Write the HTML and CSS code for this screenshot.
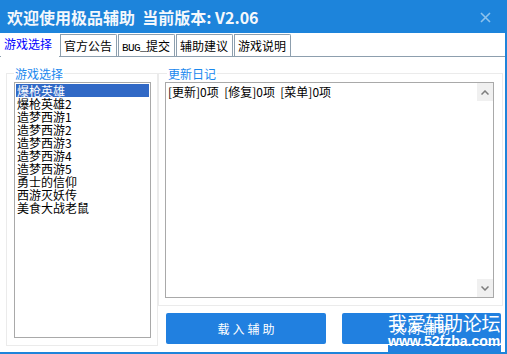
FILE: index.html
```html
<!DOCTYPE html>
<html lang="zh-CN">
<head>
    <meta charset="UTF-8">
    <title>极品辅助</title>
    <link rel="stylesheet" href="styles.css">
</head>
<body>

<div class="window">
    <div class="titlebar">
        <span class="title">欢迎使用极品辅助&nbsp; 当前版本: V2.06</span>
        <svg class="close" width="11" height="11" viewBox="0 0 11 11">
            <path d="M1 1 L10 10 M10 1 L1 10" stroke="#8ec2ec" stroke-width="1.6"/>
        </svg>
    </div>

    <div class="tabs">
        <div class="tab active">游戏选择</div>
        <div class="tab">官方公告</div>
        <div class="tab"><span class="mono">BUG_</span>提交</div>
        <div class="tab">辅助建议</div>
        <div class="tab">游戏说明</div>
    </div>

    <div class="content">
        <fieldset class="group games">
            <legend>游戏选择</legend>
            <ul class="list">
                <li class="selected">爆枪英雄</li>
                <li>爆枪英雄2</li>
                <li>造梦西游1</li>
                <li>造梦西游2</li>
                <li>造梦西游3</li>
                <li>造梦西游4</li>
                <li>造梦西游5</li>
                <li>勇士的信仰</li>
                <li>西游灭妖传</li>
                <li>美食大战老鼠</li>
            </ul>
        </fieldset>

        <div class="side">
            <fieldset class="group log">
                <legend>更新日记</legend>
                <div class="logbox">
                    <div class="logtext">[更新]0项&nbsp; [修复]0项&nbsp; [菜单]0项</div>
                    <div class="scroll">
                        <span class="arrow">
                            <svg width="8" height="5" viewBox="0 0 8 5"><path d="M0.5 4.5 L4 1 L7.5 4.5" fill="none" stroke="#7d7d7d" stroke-width="1.5"/></svg>
                        </span>
                        <span class="arrow">
                            <svg width="8" height="5" viewBox="0 0 8 5"><path d="M0.5 0.5 L4 4 L7.5 0.5" fill="none" stroke="#7d7d7d" stroke-width="1.5"/></svg>
                        </span>
                    </div>
                </div>
            </fieldset>

            <div class="buttons">
                <button class="btn">载入辅助</button>
                <button class="btn second">关闭辅助</button>
            </div>
        </div>
    </div>

    <div class="watermark">
        <div class="wm-title">我爱辅助论坛</div>
        <div class="wm-url">www.52fzba.com</div>
    </div>
</div>

</body>
</html>
```

FILE: styles.css
```css
body {
    margin: 0;
    background-color: #fff;
    font-family: "Noto Sans CJK SC", "Liberation Sans", sans-serif;
    font-size: 12px;
}
.window {
    position: relative;
    width: 507px;
    height: 354px;
    box-sizing: border-box;
    border-right: 2px solid #1e84da;
    border-bottom: 2px solid #1e84da;
    background-color: #fff;
    overflow: hidden;
}
.titlebar {
    height: 33px;
    background-color: #1d84db;
    display: flex;
    align-items: center;
    justify-content: space-between;
    padding: 0 14px 0 7px;
}
.title {
    color: #f4f8fc;
    font-size: 16px;
    font-weight: bold;
    line-height: 20px;
}
.close {
    display: block;
    margin-top: 1px;
}
.tabs {
    display: flex;
    align-items: flex-end;
    height: 23px;
    padding-left: 1px;
    border-bottom: 1px solid #8d9fae;
}
.tab {
    box-sizing: border-box;
    width: 57px;
    height: 22px;
    margin-right: 1px;
    padding-left: 3px;
    line-height: 21px;
    color: #000;
    border: 1px solid #8d9fae;
    border-bottom: none;
    border-radius: 0 2px 0 0;
    white-space: nowrap;
}
.tab .mono {
    font-family: "Liberation Mono", monospace;
    font-size: 11px;
    letter-spacing: -0.6px;
}
.tab.active {
    width: 58px;
    height: 24px;
    margin-bottom: -1px;
    padding-left: 3px;
    line-height: 22px;
    color: #0000ff;
    border: none;
    background-color: #fff;
}
.content {
    display: flex;
    padding: 9px 0 0 6px;
}
.group {
    margin: 0;
    border: 1px solid #ebebeb;
    min-width: 0;
}
.group legend {
    padding: 0 1px;
    line-height: 15px;
    color: #1a88ee;
}
.games {
    width: 152px;
    box-sizing: border-box;
    padding: 1px 6px 7px 7px;
}
.list {
    list-style: none;
    margin: 0;
    height: 256px;
    box-sizing: border-box;
    padding: 1px;
    border: 1px solid #a9a9a9;
}
.list li {
    height: 13px;
    line-height: 13px;
    padding-left: 1px;
    white-space: nowrap;
}
.list li.selected {
    background-color: #3169c6;
    color: #fff;
}
.side {
    width: 345px;
}
.log {
    width: 345px;
    box-sizing: border-box;
    padding: 1px 8px 7px 6px;
}
.log legend {
    margin-left: 2px;
}
.logbox {
    display: flex;
    height: 216px;
    box-sizing: border-box;
    border: 1px solid #a9a9a9;
}
.logtext {
    flex: 1;
    padding: 2px 0 0 2px;
    line-height: 13px;
    white-space: nowrap;
}
.scroll {
    width: 16px;
    display: flex;
    flex-direction: column;
    justify-content: space-between;
}
.arrow {
    height: 18px;
    background-color: #f0f0f0;
    display: flex;
    align-items: center;
    justify-content: center;
}
.arrow svg {
    display: block;
}
.buttons {
    display: flex;
    gap: 16px;
    margin-top: 7px;
    padding-left: 8px;
}
.btn {
    width: 160px;
    height: 31px;
    border: none;
    border-radius: 2px;
    background-color: #2180e0;
    color: #fff;
    font-family: "Noto Sans CJK SC", sans-serif;
    font-size: 12px;
    letter-spacing: 3px;
    padding: 0 0 0 3px;
}
.btn.second {
    width: 159px;
}
.watermark {
    position: absolute;
    right: 4px;
    top: 312px;
    width: 113px;
    height: 40px;
    color: #fff;
    background: linear-gradient(transparent 33px, #2180e0 33px);
}
.wm-title {
    font-size: 19px;
    line-height: 21px;
    letter-spacing: -0.3px;
    white-space: nowrap;
}
.wm-url {
    font-family: "Liberation Sans", sans-serif;
    font-size: 14px;
    font-weight: bold;
    line-height: 17px;
    white-space: nowrap;
}
```
